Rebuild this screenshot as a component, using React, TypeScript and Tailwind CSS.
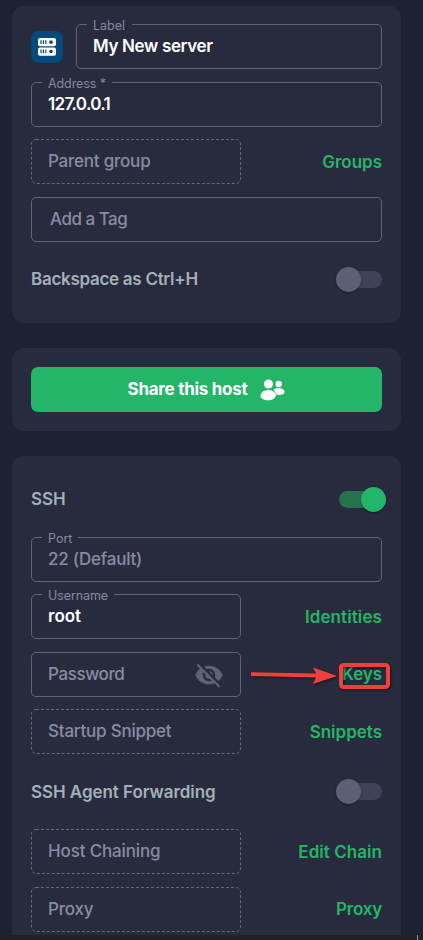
import type { ReactNode } from "react";

function Card({ className, children }: { className: string; children: ReactNode }) {
  return (
    <section className={`flex flex-col rounded-xl bg-[#282b3d] px-[19px] ${className}`}>{children}</section>
  );
}

type FieldProps = {
  legend?: string;
  legendClass?: string;
  text: string;
  textClass?: string;
  filled?: boolean;
  dashed?: boolean;
  className?: string;
  children?: ReactNode;
};

function Field({ legend, legendClass = "", text, textClass = "tracking-[-0.22px]", filled, dashed, className = "w-full", children }: FieldProps) {
  return (
    <div className={`relative flex h-[45px] shrink-0 items-center ${className}`}>
      {dashed ? (
        <svg className="absolute inset-0 h-full w-full" fill="none">
          <rect x="0.5" y="0.5" width="209" height="44" rx="4.5" stroke="#636779" strokeDasharray="3 2" />
        </svg>
      ) : (
        <div className="absolute inset-0 rounded-[5px] border border-[#5f6376]" />
      )}
      {legend && (
        <span
          className={`absolute -top-[6px] left-[11px] bg-[#282b3d] px-[6px] text-[12.5px] leading-4 whitespace-nowrap text-[#8589a0] ${legendClass}`}
        >
          {legend}
        </span>
      )}
      <span
        className={`relative mb-0.5 ml-[17px] text-[17px] leading-6 whitespace-nowrap ${filled ? "font-semibold text-white" : "font-[450] text-[#888ca3]"} ${textClass}`}
      >
        {text}
      </span>
      {children}
    </div>
  );
}

function Link({ children, className }: { children: string; className: string }) {
  return (
    <a className={`text-[17px] leading-6 font-semibold whitespace-nowrap text-[#25b567] ${className}`}>{children}</a>
  );
}

function Row({ className, children }: { className: string; children: ReactNode }) {
  return <div className={`flex items-center justify-between ${className}`}>{children}</div>;
}

function Heading({ children, className }: { children: string; className: string }) {
  return <h2 className={`text-[17px] leading-[22px] font-semibold whitespace-nowrap text-[#a3b0b9] ${className}`}>{children}</h2>;
}

function Toggle({ on = false }: { on?: boolean }) {
  return on ? (
    <div className="-mr-1 flex h-[25px] w-[47px] items-center">
      <div className="-mr-[14px] h-[17px] w-9 rounded-full bg-[#267250]" />
      <div className="h-[25px] w-[25px] shrink-0 rounded-full bg-[#23b569] shadow-[0_1px_2px_rgba(0,0,0,0.4)]" />
    </div>
  ) : (
    <div className="flex h-[25px] w-[46px] items-center">
      <div className="relative h-[25px] w-[25px] shrink-0 rounded-full bg-[#5c6074] shadow-[0_1px_2px_rgba(0,0,0,0.4)]" />
      <div className="-ml-[14px] h-[17px] w-[35px] rounded-full bg-[#404358]" />
    </div>
  );
}

function ServerIcon() {
  return (
    <div className="flex h-8 w-8 items-center justify-center rounded-lg bg-[#044a7a]">
      <svg width="18" height="18" viewBox="0 0 18 18">
        <rect y="0" width="18" height="8.3" rx="2" fill="#fff" />
        <rect y="9.5" width="18" height="8.3" rx="2" fill="#fff" />
        {[0, 9.3].map((y) => (
          <g key={y} transform={`translate(0 ${y})`}>
            <path d="M3 2.300v3.700M5.400 2.300v3.700M7.800 2.300v3.700" stroke="#044a7a" strokeWidth="1.200" />
            <circle cx="13" cy="4.150" r="1.800" fill="#044a7a" />
          </g>
        ))}
      </svg>
    </div>
  );
}

export default function App() {
  return (
    <main className="relative flex h-[940px] w-[423px] flex-col overflow-hidden bg-[#1e2132] font-['Inter','Liberation_Sans',sans-serif]">
      <div className="flex h-[935px] flex-col gap-[25px] overflow-hidden pt-[6px] pr-[22px] pl-3">
        <Card className="h-[317px] shrink-0 pt-[18px]">
          <Row className="">
            <ServerIcon />
            <Field legend="Label" legendClass="pr-[7px]" text="My New server" filled className="w-[306px]" textClass="tracking-[-0.35px]" />
          </Row>
          <Field className="mt-[13px] w-full" legend="Address *" legendClass="tracking-[-0.1px]" text="127.0.0.1" filled textClass="tracking-[-0.65px]" />
          <Row className="mt-3">
            <Field text="Parent group" dashed className="w-[210px]" />
            <Link className="">Groups</Link>
          </Row>
          <Field className="mt-[13px] w-full" text="Add a Tag" textClass="left-[2px] tracking-[-0.5px]" />
          <Row className="mt-[25px]">
            <Heading className="mb-0.5 tracking-[-0.28px]">Backspace as Ctrl+H</Heading>
            <Toggle />
          </Row>
        </Card>

        <Card className="h-[83px] shrink-0 pt-[19px]">
          <button className="flex h-[45px] items-center justify-center gap-[13px] rounded-[7px] bg-[#24b568] text-[17px] font-bold text-white">
            <span className="whitespace-nowrap tracking-[-0.27px]">Share this host</span>
            <svg width="25" height="22" viewBox="0 0 25 22" fill="#fff">
              <circle cx="8.500" cy="5" r="4.500" />
              <circle cx="18.700" cy="5" r="3.200" />
              <path d="M8.500 11C3.700 11 .500 13.800.500 17c0 2.700 3.500 4.200 8 4.200 4 0 6.400-1.500 7.700-5.200C14.700 12.400 12.300 11 8.500 11Z" />
              <path d="M13.500 10.700c1.300-1 3-1.600 5-1.600 3.500 0 6 1.800 6 3.800 0 2-2.500 3-5.300 3-1 0-2 0-3-.3-.5-2-1.500-3.600-2.700-4.900Z" />
            </svg>
          </button>
        </Card>

        <Card className="h-[500px] shrink-0 rounded-b-none pt-[31px]">
          <Row className="">
            <Heading className="mb-0.5 tracking-[-0.1px]">SSH</Heading>
            <Toggle on />
          </Row>
          <Field className="mt-[25px] w-full" legend="Port" text="22 (Default)" />
          <Row className="mt-3">
            <Field legend="Username" legendClass="tracking-[-0.1px]" text="root" filled className="w-[210px]" textClass="" />
            <Link className="tracking-[0.1px]">Identities</Link>
          </Row>
          <Row className="mt-[13px]">
            <Field text="Password" className="w-[210px]" textClass="tracking-[-0.4px]">
              <svg className="relative mr-[17px] ml-auto" width="30" height="30" viewBox="0 0 24 24" fill="#5e6276">
                <path d="M12 7c2.760 0 5 2.240 5 5 0 .650-.130 1.260-.360 1.830l2.920 2.920c1.510-1.260 2.700-2.890 3.430-4.750-1.730-4.390-6-7.500-11-7.500-1.400 0-2.740.250-3.980.700l2.160 2.160C10.740 7.130 11.350 7 12 7zM2 4.270l2.280 2.280.46.460C3.080 8.300 1.780 10.020 1 12c1.730 4.390 6 7.500 11 7.500 1.550 0 3.030-.300 4.380-.840l.42.420L19.730 22 21 20.730 3.270 3 2 4.270zM7.530 9.800l1.550 1.550c-.050.210-.080.430-.080.650 0 1.660 1.340 3 3 3 .220 0 .440-.030.650-.080l1.550 1.550c-.670.330-1.410.530-2.200.530-2.760 0-5-2.240-5-5 0-.790.200-1.530.530-2.200zm4.310-.780l3.150 3.150.020-.160c0-1.660-1.340-3-3-3l-.170.010z" />
              </svg>
            </Field>
            <Link className="mb-0.5 tracking-[-0.1px]">Keys</Link>
          </Row>
          <Row className="mt-3">
            <Field text="Startup Snippet" dashed className="w-[210px]" />
            <Link className="">Snippets</Link>
          </Row>
          <Row className="mt-[25px]">
            <Heading className="tracking-[-0.05px]">SSH Agent Forwarding</Heading>
            <Toggle />
          </Row>
          <Row className="mt-[25px]">
            <Field text="Host Chaining" dashed className="w-[210px]" textClass="tracking-[-0.15px]" />
            <Link className="tracking-[0.05px]">Edit Chain</Link>
          </Row>
          <Row className="mt-[13px]">
            <Field text="Proxy" dashed className="w-[210px]" />
            <Link className="mb-0.5 tracking-[-0.2px]">Proxy</Link>
          </Row>
        </Card>
      </div>
      <footer className="flex h-[5px] justify-end bg-[#1e2224] pr-[5px]">
        <div className="h-full w-px bg-[#92969a]" />
      </footer>

      {/* Callout pointing at the Keys link */}
      <svg
        className="pointer-events-none absolute top-[655px] left-[245px] drop-shadow-[1px_1px_1px_rgba(0,0,0,0.6)]"
        width="150"
        height="40"
        viewBox="245 655 150 40"
        fill="#f43d3d"
      >
        <path d="M251 672.200 316 673.500 313 667.500 337 676 313 684 316 677.500 251 676Z" />
        <rect x="341" y="665" width="47" height="22" rx="2.500" fill="none" stroke="#f43d3d" strokeWidth="4" />
      </svg>
    </main>
  );
}
